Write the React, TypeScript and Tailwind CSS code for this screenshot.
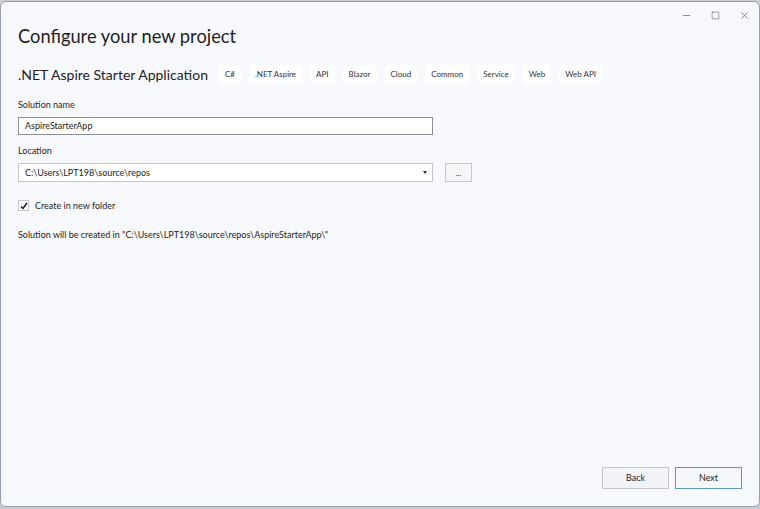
import { Minus, Square, X } from "lucide-react";

const tags = ["C#", ".NET Aspire", "API", "Blazor", "Cloud", "Common", "Service", "Web", "Web API"];

export default function App() {
  return (
    <div className="w-[760px] h-[509px] bg-[#c9ccd3] overflow-hidden font-['Lato',sans-serif] text-[#1e1e1e]">
      <div className="relative h-[506px] mt-[1px] bg-[#f8f9fd] rounded-[6px] border border-[#9aa0ab] flex flex-col">
        {/* window controls */}
        <div className="absolute top-0 right-0 flex items-center h-[26px] text-[#333]">
          <div className="w-[29px] flex justify-center"><Minus size={11} strokeWidth={1.2} /></div>
          <div className="w-[29px] flex justify-center"><Square size={9} strokeWidth={1.3} /></div>
          <div className="w-[29px] flex justify-center"><X size={11} strokeWidth={1.2} /></div>
        </div>

        <div className="px-[17px] pt-[21px] flex flex-col">
          <h1 className="text-[18.3px] leading-[26px]">Configure your new project</h1>

          <div className="flex items-center mt-[16px] h-[18px]">
            <span className="text-[14px] mr-[11px]">.NET Aspire Starter Application</span>
            <div className="flex gap-[8px]">
              {tags.map((t) => (
                <span key={t} className="bg-white rounded-[2px] px-[6px] h-[18px] flex items-center text-[8px] text-[#333]">
                  {t}
                </span>
              ))}
            </div>
          </div>

          <label className="text-[9px] mt-[15px] leading-[14px]">Solution name</label>
          <div className="mt-[5px] w-[415px] h-[18px] bg-white border border-[#8a8f98] flex items-center px-[6px] text-[9px]">
            AspireStarterApp
          </div>

          <label className="text-[9px] mt-[9px] leading-[14px]">Location</label>
          <div className="flex items-center mt-[5px] gap-[12px]">
            <div className="w-[415px] h-[19px] bg-white border border-[#c3c6cc] flex items-center justify-between px-[6px] text-[9px]">
              <span>C:\Users\LPT198\source\repos</span>
              <svg width="4" height="3" viewBox="0 0 4 3" className="mr-[-1px]"><path d="M0 0h4L2 3z" fill="#333" /></svg>
            </div>
            <div className="w-[27px] h-[19px] bg-[#f5f6f8] border border-[#c3c6cc] flex items-end justify-center pb-[4px] text-[8px] leading-none">
              ...
            </div>
          </div>

          <div className="flex items-center mt-[17px] gap-[6px]">
            <div className="w-[11px] h-[11px] bg-white border border-[#c3c6cc] flex items-center justify-center">
              <svg width="8" height="8" viewBox="0 0 8 8"><path d="M1 4.5L3 6.5L7 1" fill="none" stroke="#111" strokeWidth="1.4" /></svg>
            </div>
            <span className="text-[9px]">Create in new folder</span>
          </div>

          <p className="text-[9px] mt-[15px]">Solution will be created in "C:\Users\LPT198\source\repos\AspireStarterApp\"</p>
        </div>

        <div className="mt-auto flex justify-end gap-[6px] pr-[17px] pb-[17px]">
          <button className="w-[67px] h-[22px] bg-[#f1f3f8] border border-[#c3c6cc] text-[9px]">Back</button>
          <button className="w-[67px] h-[22px] bg-[#f5f7fb] border border-[#5d9bb7] text-[9px]">Next</button>
        </div>
      </div>
    </div>
  );
}
